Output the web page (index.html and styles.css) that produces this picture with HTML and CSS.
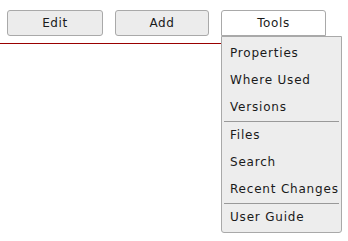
FILE: index.html
```html
<!DOCTYPE html>
<html>
<head>
<meta charset="utf-8">
<link rel="stylesheet" href="styles.css">
</head>
<body>
<div class="header">
  <div class="toolbar">
    <button class="btn btn-edit">Edit</button>
    <button class="btn btn-add">Add</button>
    <div class="tools-wrap">
      <button class="btn btn-tools open">Tools</button>
      <ul class="menu">
        <li class="item">Properties</li>
        <li class="item">Where Used</li>
        <li class="item">Versions</li>
        <li class="sep"></li>
        <li class="item">Files</li>
        <li class="item">Search</li>
        <li class="item">Recent Changes</li>
        <li class="sep"></li>
        <li class="item">User Guide</li>
      </ul>
    </div>
  </div>
  <div class="rule"></div>
</div>
</body>
</html>
```
FILE: styles.css
```css
html, body {
  margin: 0;
  padding: 0;
  background: #fff;
  min-height: 100%;
}
html { height: 100%; }
body {
  font-family: "DejaVu Sans", Verdana, sans-serif;
  font-size: 12px;
  color: #1a1a1a;
}
.header {
  position: relative;
}
.toolbar {
  display: flex;
  align-items: flex-start;
  gap: 12px;
  padding: 10px 0 0 7px;
}
.btn {
  box-sizing: border-box;
  height: 26px;
  margin: 0;
  padding: 0;
  font-family: inherit;
  font-size: 12px;
  letter-spacing: 0.6px;
  color: #1a1a1a;
  background: #ececec;
  border: 1px solid #a9a9a9;
  border-radius: 3px;
}
.btn-edit { width: 96px; }
.btn-add { width: 94px; }
.tools-wrap {
  position: relative;
  width: 105px;
  height: 26px;
}
.btn-tools {
  width: 105px;
  background: #fff;
  border-radius: 3px 3px 0 0;
}
.rule {
  width: 222px;
  height: 0;
  margin-top: 7px;
  border-top: 1px solid #990000;
}
.menu {
  position: absolute;
  left: 0;
  top: 26px;
  box-sizing: border-box;
  width: 121px;
  margin: 0;
  padding: 3px 0 1px;
  list-style: none;
  background: #ededed;
  border: 1px solid #a9a9a9;
  border-radius: 0 0 3px 3px;
  z-index: 2;
}
.item {
  display: block;
  height: 27px;
  line-height: 27px;
  padding-left: 8px;
  letter-spacing: 0.8px;
  white-space: nowrap;
  color: #1a1a1a;
}
.sep {
  display: block;
  height: 1px;
  margin: 0 2px;
  background: #999;
}
```
